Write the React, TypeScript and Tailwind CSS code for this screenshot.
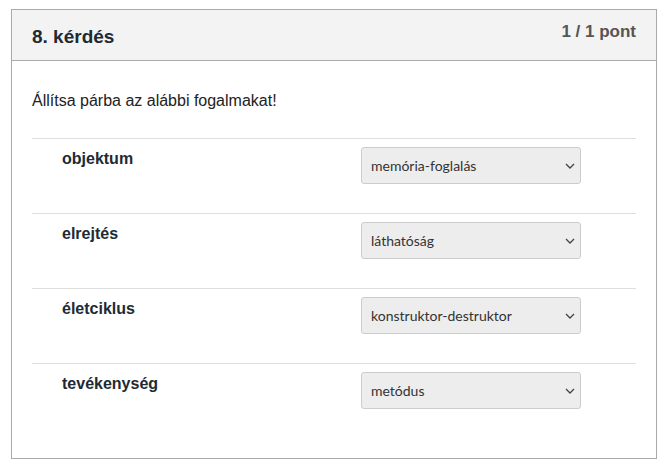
import React from "react";

const rows = [
  { term: "objektum", value: "memória-foglalás" },
  { term: "elrejtés", value: "láthatóság" },
  { term: "életciklus", value: "konstruktor-destruktor" },
  { term: "tevékenység", value: "metódus" },
];

const Chevron = () => (
  <svg width="10" height="8" viewBox="0 0 10 8" className="shrink-0">
    <path d="M1 2 L5 6 L9 2" fill="none" stroke="#444" strokeWidth="1.3" />
  </svg>
);

export default function App() {
  return (
    <div className="w-[665px] h-[467px] bg-white pt-[9px] pl-[11px] font-['Liberation_Sans',Arial,sans-serif]">
      <div className="w-[646px] h-[450px] border border-[#aaaaaa] flex flex-col">
        <div className="h-[51px] bg-[#f3f3f3] border-b border-[#aaaaaa] flex justify-between px-[20px]">
          <h2 className="text-[19px] font-bold text-[#212a33] mt-[15px] leading-[24px]">8. kérdés</h2>
          <span className="text-[17px] font-bold text-[#555555] mt-[12px] leading-[20px]">1 / 1 pont</span>
        </div>
        <div className="px-[20px]">
          <p className="text-[16px] text-[#222222] mt-[30px] leading-[20px] mb-[27px]">
            Állítsa párba az alábbi fogalmakat!
          </p>
          {rows.map((r) => (
            <div key={r.term} className="h-[75px] border-t border-[#dddddd] flex">
              <div className="w-[329px] pl-[30px] pt-[10px] text-[16px] font-bold text-[#212a33] leading-[20px]">
                {r.term}
              </div>
              <div className="pt-[8px]">
                <div className="w-[220px] h-[37px] bg-[#ededed] border border-[#cccccc] rounded-[3px] flex items-center justify-between pl-[9px] pr-[5px] font-['Lato',sans-serif] text-[14px] text-[#333333]">
                  <span>{r.value}</span>
                  <Chevron />
                </div>
              </div>
            </div>
          ))}
        </div>
      </div>
    </div>
  );
}
